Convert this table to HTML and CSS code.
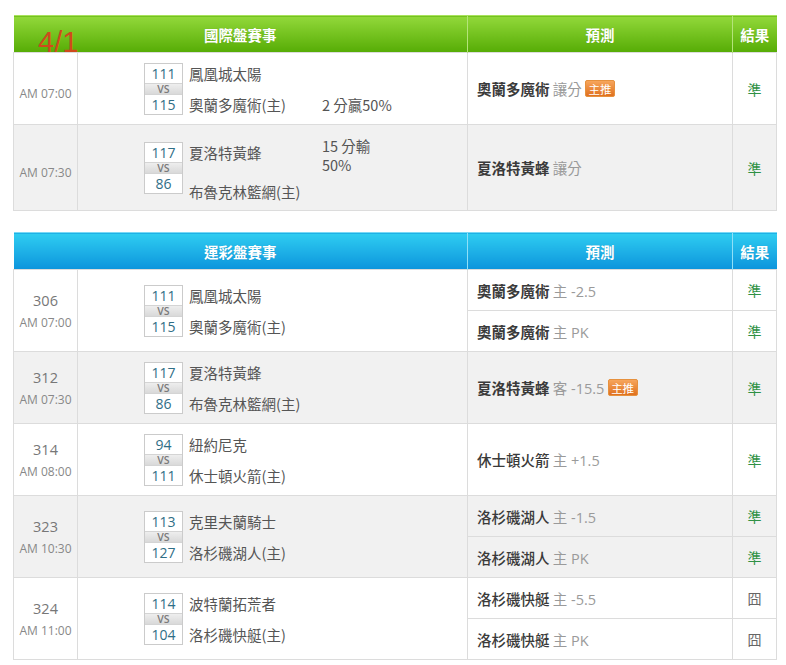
FILE: index.html
```html
<!DOCTYPE html>
<html lang="zh-Hant">
<head>
<meta charset="utf-8">
<title>賽事預測</title>
<link rel="stylesheet" href="styles.css">
</head>
<body>
<div class="page">
  <div class="date">4/1</div>

  <table class="board intl">
    <colgroup><col class="c-time"><col class="c-match"><col class="c-pick"><col class="c-res"></colgroup>
    <thead>
      <tr><th colspan="2">國際盤賽事</th><th>預測</th><th>結果</th></tr>
    </thead>
    <tbody>
      <tr class="row-a">
        <td class="time"><span class="clock pad">AM 07:00</span></td>
        <td class="match">
          <div class="m">
            <div class="score"><span class="n">111</span><span class="vs">VS</span><span class="n">115</span></div>
            <div class="teams">
              <div class="tm">鳳凰城太陽</div><div class="nt"></div>
              <div class="tm">奧蘭多魔術(主)</div><div class="nt">2 分贏50%</div>
            </div>
          </div>
        </td>
        <td class="pick"><b>奧蘭多魔術</b> <span class="sub">讓分</span> <span class="badge">主推</span></td>
        <td class="res ok">準</td>
      </tr>
      <tr class="row-b alt">
        <td class="time"><span class="clock pad">AM 07:30</span></td>
        <td class="match">
          <div class="m">
            <div class="score"><span class="n">117</span><span class="vs">VS</span><span class="n">86</span></div>
            <div class="teams">
              <div class="tm">夏洛特黃蜂</div><div class="nt tall">15 分輸<br>50%</div>
              <div class="tm">布魯克林籃網(主)</div><div class="nt"></div>
            </div>
          </div>
        </td>
        <td class="pick"><b>夏洛特黃蜂</b> <span class="sub">讓分</span></td>
        <td class="res ok">準</td>
      </tr>
    </tbody>
  </table>

  <table class="board lottery">
    <colgroup><col class="c-time"><col class="c-match"><col class="c-pick"><col class="c-res"></colgroup>
    <thead>
      <tr><th colspan="2">運彩盤賽事</th><th>預測</th><th>結果</th></tr>
    </thead>
    <tbody>
      <tr class="sub-row">
        <td class="time" rowspan="2"><span class="no">306</span><span class="clock">AM 07:00</span></td>
        <td class="match" rowspan="2">
          <div class="m">
            <div class="score"><span class="n">111</span><span class="vs">VS</span><span class="n">115</span></div>
            <div class="teams">
              <div class="tm">鳳凰城太陽</div><div class="nt"></div>
              <div class="tm">奧蘭多魔術(主)</div><div class="nt"></div>
            </div>
          </div>
        </td>
        <td class="pick"><b>奧蘭多魔術</b> <span class="sub">主 -2.5</span></td>
        <td class="res ok">準</td>
      </tr>
      <tr class="sub-row">
        <td class="pick"><b>奧蘭多魔術</b> <span class="sub">主 PK</span></td>
        <td class="res ok">準</td>
      </tr>

      <tr class="single alt">
        <td class="time"><span class="no">312</span><span class="clock">AM 07:30</span></td>
        <td class="match">
          <div class="m">
            <div class="score"><span class="n">117</span><span class="vs">VS</span><span class="n">86</span></div>
            <div class="teams">
              <div class="tm">夏洛特黃蜂</div><div class="nt"></div>
              <div class="tm">布魯克林籃網(主)</div><div class="nt"></div>
            </div>
          </div>
        </td>
        <td class="pick"><b>夏洛特黃蜂</b> <span class="sub">客 -15.5</span> <span class="badge">主推</span></td>
        <td class="res ok">準</td>
      </tr>

      <tr class="single">
        <td class="time"><span class="no">314</span><span class="clock">AM 08:00</span></td>
        <td class="match">
          <div class="m">
            <div class="score"><span class="n">94</span><span class="vs">VS</span><span class="n">111</span></div>
            <div class="teams">
              <div class="tm">紐約尼克</div><div class="nt"></div>
              <div class="tm">休士頓火箭(主)</div><div class="nt"></div>
            </div>
          </div>
        </td>
        <td class="pick"><b class="lt">休士頓火箭</b> <span class="sub">主 +1.5</span></td>
        <td class="res ok">準</td>
      </tr>

      <tr class="sub-row alt">
        <td class="time" rowspan="2"><span class="no">323</span><span class="clock">AM 10:30</span></td>
        <td class="match" rowspan="2">
          <div class="m">
            <div class="score"><span class="n">113</span><span class="vs">VS</span><span class="n">127</span></div>
            <div class="teams">
              <div class="tm">克里夫蘭騎士</div><div class="nt"></div>
              <div class="tm">洛杉磯湖人(主)</div><div class="nt"></div>
            </div>
          </div>
        </td>
        <td class="pick"><b class="lt">洛杉磯湖人</b> <span class="sub">主 -1.5</span></td>
        <td class="res ok">準</td>
      </tr>
      <tr class="sub-row alt">
        <td class="pick"><b class="lt">洛杉磯湖人</b> <span class="sub">主 PK</span></td>
        <td class="res ok">準</td>
      </tr>

      <tr class="sub-row">
        <td class="time" rowspan="2"><span class="no">324</span><span class="clock">AM 11:00</span></td>
        <td class="match" rowspan="2">
          <div class="m">
            <div class="score"><span class="n">114</span><span class="vs">VS</span><span class="n">104</span></div>
            <div class="teams">
              <div class="tm">波特蘭拓荒者</div><div class="nt"></div>
              <div class="tm">洛杉磯快艇(主)</div><div class="nt"></div>
            </div>
          </div>
        </td>
        <td class="pick"><b class="lt">洛杉磯快艇</b> <span class="sub">主 -5.5</span></td>
        <td class="res bad">囧</td>
      </tr>
      <tr class="sub-row">
        <td class="pick"><b class="lt">洛杉磯快艇</b> <span class="sub">主 PK</span></td>
        <td class="res bad">囧</td>
      </tr>
    </tbody>
  </table>
</div>
</body>
</html>
```

FILE: styles.css
```css
body {
  margin: 0;
  background: #fff;
  font-family: "Open Sans", "Noto Sans CJK TC", sans-serif;
  color: #555;
}

.page {
  position: relative;
  padding: 15px 10px 0 13px;
}

.date {
  position: absolute;
  left: 38px;
  top: 28px;
  z-index: 2;
  font-family: "Liberation Sans", Arial, sans-serif;
  font-size: 29px;
  line-height: 1;
  color: #cf4a1c;
}

.board {
  width: 763px;
  border-collapse: collapse;
  table-layout: fixed;
  font-size: 14.5px;
}

.intl { margin-bottom: 21px; }

.c-time { width: 64px; }
.c-match { width: 390px; }
.c-pick { width: 265px; }
.c-res { width: 44px; }

.board th {
  height: 36px;
  padding: 0;
  color: #fff;
  font-family: "Noto Sans CJK TC", sans-serif;
  font-size: 14.5px;
  font-weight: bold;
  text-align: center;
  text-shadow: 0 0 1px rgba(0, 0, 0, 0.15);
}

.intl th {
  background: linear-gradient(#92d83a, #56ac05);
  border-left: 1px solid #b4e47a;
  border-top: 1px solid #a9e25c;
}

.lottery th {
  background: linear-gradient(#2fcdf1, #0c94dc);
  border-left: 1px solid #8fe0f8;
  border-top: 1px solid #7ad9f5;
}

.board th:first-child { border-left: none; }

.board td {
  border: 1px solid #dcdcdc;
  padding: 0;
  vertical-align: middle;
}

.board tr.alt td { background: #f1f1f1; }

.row-a td { height: 71px; }
.row-b td { height: 85px; }
.sub-row td { height: 40px; }
.single td { height: 71px; }

/* time column */
.time { text-align: center; }
.clock {
  display: block;
  font-size: 12px;
  line-height: 20px;
  color: #888;
}
.clock.pad { padding-top: 10px; }
.no {
  display: block;
  font-size: 14.5px;
  line-height: 24px;
  color: #777;
}

/* match column */
.match { padding-left: 66px !important; }

.m {
  display: flex;
  align-items: center;
  gap: 6px;
}

.score {
  box-sizing: border-box;
  width: 39px;
  display: flex;
  flex-direction: column;
  border: 1px solid #cbcbcb;
  background: #fff;
  flex: none;
}

.score .n {
  height: 19px;
  line-height: 19px;
  text-align: center;
  font-size: 14px;
  color: #2f6e86;
}

.score .vs {
  height: 10px;
  line-height: 10px;
  text-align: center;
  font-size: 10.5px;
  font-weight: 600;
  color: #7a7a7a;
  background: linear-gradient(#eee, #d9d9d9);
  border-top: 1px solid #d4d4d4;
  border-bottom: 1px solid #d4d4d4;
}

.teams {
  display: grid;
  grid-template-columns: 133px auto;
  font-family: "Noto Sans CJK TC", sans-serif;
  color: #555;
}

.tm {
  line-height: 19px;
  padding: 6px 0;
  display: flex;
  align-items: center;
}

.nt {
  line-height: 19px;
  padding: 6px 0;
}

.nt.tall { padding: 7px 0 2px; }

/* prediction column */
.pick {
  padding-left: 9px !important;
  font-family: "Noto Sans CJK TC", sans-serif;
  color: #333;
}

.pick b { font-weight: bold; color: #3a3a3a; }
.pick b.lt { font-weight: 500; }

.sub {
  font-family: "Open Sans", "Noto Sans CJK TC", sans-serif;
  color: #9a9a9a;
}

.badge {
  display: inline-block;
  vertical-align: 1px;
  width: 30px;
  height: 17px;
  line-height: 17px;
  text-align: center;
  font-size: 11.5px;
  color: #fff;
  background: linear-gradient(#f6a55c, #e0711f);
  border-radius: 2px;
  border: 1px solid #e6913e;
  box-sizing: border-box;
}

/* result column */
.res {
  text-align: center;
  font-family: "Noto Sans CJK TC", sans-serif;
  font-size: 14px;
}
.res.ok { color: #2f9145; }
.res.bad { color: #666; }
```
